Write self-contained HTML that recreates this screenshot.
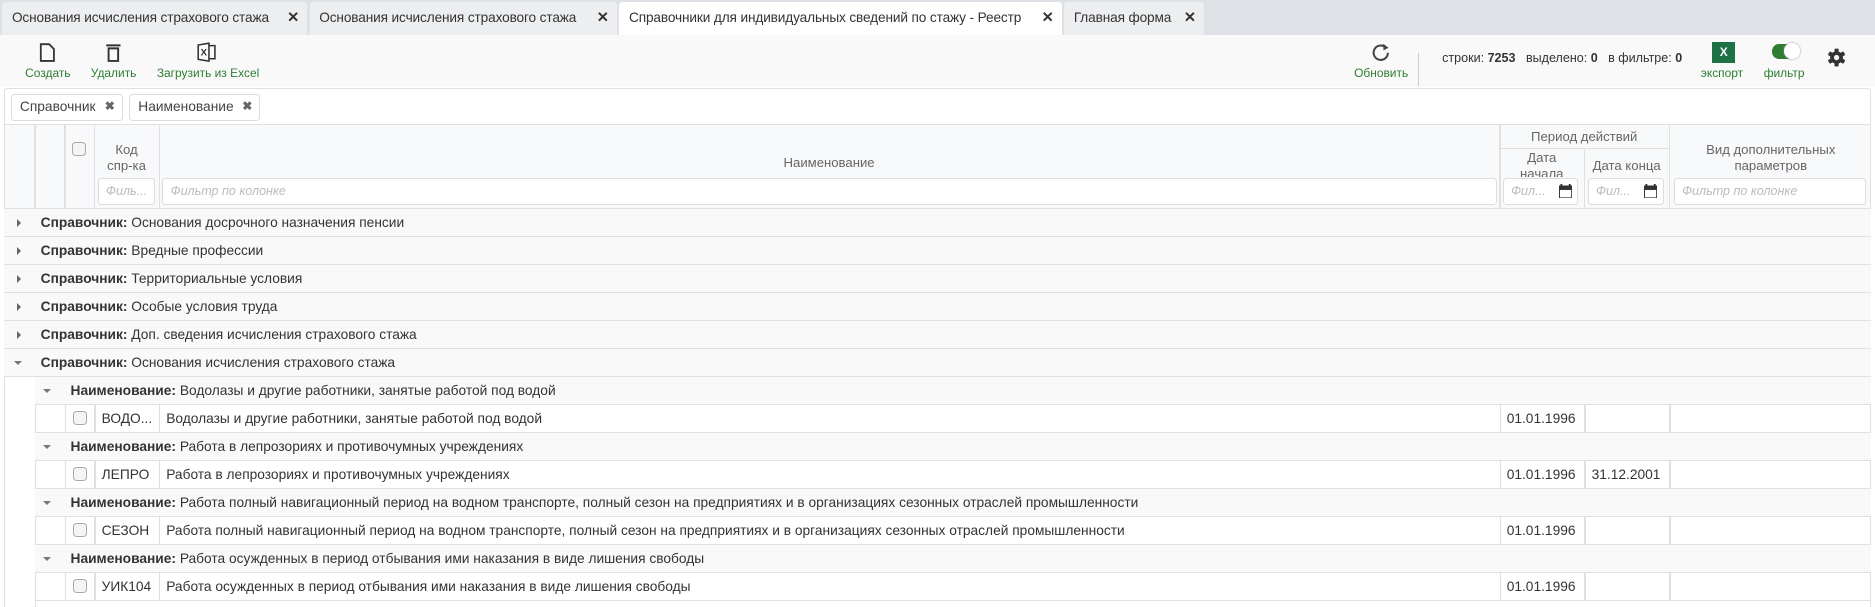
<!DOCTYPE html>
<html><head><meta charset="utf-8"><style>
*{box-sizing:border-box;margin:0;padding:0}
html,body{width:1875px;height:607px;overflow:hidden;background:#fff}
#w{zoom:1.1958;width:1568px;height:508px;position:relative;font-family:"Liberation Sans",sans-serif;font-size:11.5px;color:#333}
.a{position:absolute}
.tabs{left:0;top:0;width:1568px;height:29px;background:#dee1e5}
.tab{position:absolute;top:2px;height:27px;background:#eceef0;border-radius:3px 3px 0 0;line-height:27px;padding-left:8px;font-size:11.4px;letter-spacing:-0.1px;color:#333;white-space:nowrap}
.tab b{position:absolute;right:7px;top:0;font-size:12px;font-weight:bold}
.tb{top:29px;left:0;width:1568px;height:44px;background:#f9f9f9}
.lbl{position:absolute;top:26px;font-size:10px;color:#2e7d32;white-space:nowrap;transform:translateX(-50%)}
.grp{left:3px;top:74px;width:1562px;height:30px;border:1px solid #e0e0e0;border-bottom:none;border-radius:3px 3px 0 0;background:#fff}
.chip{position:absolute;top:4px;height:22px;border:1px solid #ddd;border-radius:3px;line-height:20px;padding-left:7px;font-size:11.5px;color:#444}
.chip b{position:absolute;right:6px;font-size:10px;color:#666}
.hdr{left:3px;top:104px;width:1562px;height:71px;background:#f8f9fa;border:1px solid #e0e0e0}
.vl{position:absolute;width:1px;background:#e0e0e0}
.hl{position:absolute;height:1px;background:#e0e0e0}
.ht{position:absolute;color:#666;font-size:11px;text-align:center;line-height:13px}
.inp{position:absolute;top:44px;height:23px;border:1px solid #ddd;border-radius:3px;background:#fff;font-style:italic;color:#bbb;font-size:10.5px;line-height:21px;padding-left:6px;white-space:nowrap;overflow:hidden}
.cb{position:absolute;width:12px;height:12px;border:1px solid #aaa;border-radius:3px;background:#f4f4f4}
.row{position:absolute;left:3px;width:1562px;height:23.4px;border-bottom:1px solid #e0e0e0;line-height:23px;white-space:nowrap}
.row.g{background:#f9f9f9}
.row span{position:absolute}
.tri{position:absolute;width:0;height:0}
.tr{border-left:4px solid #666;border-top:4px solid transparent;border-bottom:4px solid transparent;top:8px}
.td{border-top:4px solid #777;border-left:4px solid transparent;border-right:4px solid transparent;top:10px}
</style></head><body><div id="w">
<div class="a tabs">
 <div class="tab" style="left:2px;width:255px">Основания исчисления страхового стажа<b>✕</b></div>
 <div class="tab" style="left:259px;width:257px">Основания исчисления страхового стажа<b>✕</b></div>
 <div class="tab" style="left:518px;width:370px;background:#fff">Справочники для индивидуальных сведений по стажу - Реестр<b>✕</b></div>
 <div class="tab" style="left:890px;width:117px">Главная форма<b>✕</b></div>
</div>
<div class="a tb">
 <svg class="a" style="left:33px;top:7px" width="14" height="16" viewBox="0 0 14 16"><path d="M1.5 1h7l4 4v10h-11z" fill="none" stroke="#333" stroke-width="1.5"/></svg>
 <div class="lbl" style="left:40px">Создать</div>
 <svg class="a" style="left:88px;top:7px" width="14" height="16" viewBox="0 0 14 16"><path d="M1 2h12M3 4.5h8v10.5h-8z" fill="none" stroke="#333" stroke-width="1.6"/></svg>
 <div class="lbl" style="left:95px">Удалить</div>
 <svg class="a" style="left:165px;top:6px" width="16" height="17" viewBox="0 0 16 17"><path d="M1 2.5l9-1.5v15l-9-1.5zM10 3h5v11h-5" fill="none" stroke="#333" stroke-width="1.3"/><text x="3" y="11.5" font-size="8" font-weight="bold" font-family="Liberation Sans" fill="#333">X</text></svg>
 <div class="lbl" style="left:174px">Загрузить из Excel</div>
 <svg class="a" style="left:1146px;top:6px" width="18" height="18" viewBox="0 0 18 18"><path d="M15 9a6 6 0 1 1-2-4.5" fill="none" stroke="#444" stroke-width="1.7"/><path d="M11 1.5l4.5 3.3-4.2 2.2z" fill="#444"/></svg>
 <div class="lbl" style="left:1155px">Обновить</div>
 <div class="a" style="left:1186px;top:15px;width:1px;height:28px;background:#ccc"></div>
 <div class="a" style="left:1206px;top:14px;font-size:10.5px;color:#333;white-space:nowrap">строки: <b>7253</b> &nbsp; выделено: <b>0</b> &nbsp; в фильтре: <b>0</b></div>
 <div class="a" style="left:1432px;top:6px;width:19px;height:18px;background:#1e7145;color:#fff;font-size:10px;font-weight:bold;text-align:center;line-height:18px">X</div>
 <div class="lbl" style="left:1440px">экспорт</div>
 <div class="a" style="left:1482px;top:8px;width:22px;height:12px;border-radius:6px;background:#2e7d32"></div>
 <div class="a" style="left:1492px;top:7px;width:13px;height:13px;border-radius:50%;background:#fff;box-shadow:0 0 2px #999"></div>
 <div class="lbl" style="left:1492px">фильтр</div>
 <svg class="a" style="left:1528px;top:11px" width="16" height="16" viewBox="0 0 16 16"><g fill="#333"><circle cx="8" cy="8" r="5.3"/><rect x="6.3" y="0.5" width="3.4" height="15" rx="0.6"/><rect x="6.3" y="0.5" width="3.4" height="15" rx="0.6" transform="rotate(60 8 8)"/><rect x="6.3" y="0.5" width="3.4" height="15" rx="0.6" transform="rotate(120 8 8)"/></g><circle cx="8" cy="8" r="2.2" fill="#f9f9f9"/></svg>
</div>
<div class="a grp">
 <div class="chip" style="left:5px;width:94px">Справочник<b>✖</b></div>
 <div class="chip" style="left:104px;width:110px">Наименование<b>✖</b></div>
</div>
<div class="a hdr">
 <div class="vl" style="left:25px;top:0;height:70px"></div>
 <div class="vl" style="left:50px;top:0;height:70px"></div>
 <div class="vl" style="left:75px;top:0;height:70px"></div>
 <div class="vl" style="left:129px;top:0;height:70px"></div>
 <div class="vl" style="left:1250px;top:0;height:70px"></div>
 <div class="vl" style="left:1321px;top:19px;height:51px"></div>
 <div class="vl" style="left:1392px;top:0;height:70px"></div>
 <div class="hl" style="left:1250px;top:19px;width:142px"></div>
 <div class="cb" style="left:56px;top:14px"></div>
 <div class="ht" style="left:75px;top:14px;width:54px">Код<br>спр-ка</div>
 <div class="ht" style="left:129px;top:25px;width:1121px">Наименование</div>
 <div class="ht" style="left:1250px;top:3px;width:142px">Период действий</div>
 <div class="ht" style="left:1250px;top:21px;width:71px;height:22px;overflow:hidden">Дата<br>начала</div>
 <div class="ht" style="left:1321px;top:27px;width:71px">Дата конца</div>
 <div class="ht" style="left:1392px;top:14px;width:170px">Вид дополнительных<br>параметров</div>
 <div class="inp" style="left:78px;width:48px">Филь...</div>
 <div class="inp" style="left:132px;width:1116px">Фильтр по колонке</div>
 <div class="inp" style="left:1253px;width:63px">Фил...</div>
 <div class="inp" style="left:1324px;width:64px">Фил...</div>
 <div class="inp" style="left:1396px;width:161px">Фильтр по колонке</div>
 <svg class="a" style="left:1300px;top:49px" width="11" height="12" viewBox="0 0 11 12"><path d="M0 2h11v10h-11z M2 0v3M9 0v3" fill="none" stroke="#333" stroke-width="1.6"/><rect x="0" y="2" width="11" height="3" fill="#333"/></svg>
 <svg class="a" style="left:1371px;top:49px" width="11" height="12" viewBox="0 0 11 12"><path d="M0 2h11v10h-11z M2 0v3M9 0v3" fill="none" stroke="#333" stroke-width="1.6"/><rect x="0" y="2" width="11" height="3" fill="#333"/></svg>
</div>
<div class="a" style="left:3px;top:175px;width:1px;height:333px;background:#e0e0e0"></div>
<div class="a" style="left:1564px;top:175px;width:1px;height:333px;background:#e0e0e0"></div>

<div class="row g" style="top:175px"><div class="tri tr" style="left:11px"></div><span style="left:31px"><b>Справочник:</b> Основания досрочного назначения пенсии</span></div>
<div class="row g" style="top:198.4px"><div class="tri tr" style="left:11px"></div><span style="left:31px"><b>Справочник:</b> Вредные профессии</span></div>
<div class="row g" style="top:221.8px"><div class="tri tr" style="left:11px"></div><span style="left:31px"><b>Справочник:</b> Территориальные условия</span></div>
<div class="row g" style="top:245.2px"><div class="tri tr" style="left:11px"></div><span style="left:31px"><b>Справочник:</b> Особые условия труда</span></div>
<div class="row g" style="top:268.6px"><div class="tri tr" style="left:11px"></div><span style="left:31px"><b>Справочник:</b> Доп. сведения исчисления страхового стажа</span></div>
<div class="row g" style="top:292px"><div class="tri td" style="left:9px"></div><span style="left:31px"><b>Справочник:</b> Основания исчисления страхового стажа</span></div>
<div class="a" style="left:29px;top:315px;width:1px;height:193px;background:#e0e0e0"></div>

<div class="row g" style="top:315.4px;left:29px;width:1536px"><div class="tri td" style="left:7px"></div><span style="left:30px"><b>Наименование:</b> Водолазы и другие работники, занятые работой под водой</span></div>
<div class="row" style="top:338.8px;left:29px;width:1536px"><div class="vl" style="left:25px;top:0;height:23px"></div><div class="cb" style="left:32px;top:5px"></div><div class="vl" style="left:50px;top:0;height:23px"></div><span style="left:56px">ВОДО...</span><div class="vl" style="left:104px;top:0;height:23px"></div><span style="left:110px">Водолазы и другие работники, занятые работой под водой</span><div class="vl" style="left:1225px;top:0;height:23px"></div><span style="left:1231px">01.01.1996</span><div class="vl" style="left:1296px;top:0;height:23px"></div><div class="vl" style="left:1367px;top:0;height:23px"></div></div>
<div class="row g" style="top:362.2px;left:29px;width:1536px"><div class="tri td" style="left:7px"></div><span style="left:30px"><b>Наименование:</b> Работа в лепрозориях и противочумных учреждениях</span></div>
<div class="row" style="top:385.6px;left:29px;width:1536px"><div class="vl" style="left:25px;top:0;height:23px"></div><div class="cb" style="left:32px;top:5px"></div><div class="vl" style="left:50px;top:0;height:23px"></div><span style="left:56px">ЛЕПРО</span><div class="vl" style="left:104px;top:0;height:23px"></div><span style="left:110px">Работа в лепрозориях и противочумных учреждениях</span><div class="vl" style="left:1225px;top:0;height:23px"></div><span style="left:1231px">01.01.1996</span><div class="vl" style="left:1296px;top:0;height:23px"></div><span style="left:1302px">31.12.2001</span><div class="vl" style="left:1367px;top:0;height:23px"></div></div>
<div class="row g" style="top:409px;left:29px;width:1536px"><div class="tri td" style="left:7px"></div><span style="left:30px"><b>Наименование:</b> Работа полный навигационный период на водном транспорте, полный сезон на предприятиях и в организациях сезонных отраслей промышленности</span></div>
<div class="row" style="top:432.4px;left:29px;width:1536px"><div class="vl" style="left:25px;top:0;height:23px"></div><div class="cb" style="left:32px;top:5px"></div><div class="vl" style="left:50px;top:0;height:23px"></div><span style="left:56px">СЕЗОН</span><div class="vl" style="left:104px;top:0;height:23px"></div><span style="left:110px">Работа полный навигационный период на водном транспорте, полный сезон на предприятиях и в организациях сезонных отраслей промышленности</span><div class="vl" style="left:1225px;top:0;height:23px"></div><span style="left:1231px">01.01.1996</span><div class="vl" style="left:1296px;top:0;height:23px"></div><div class="vl" style="left:1367px;top:0;height:23px"></div></div>
<div class="row g" style="top:455.8px;left:29px;width:1536px"><div class="tri td" style="left:7px"></div><span style="left:30px"><b>Наименование:</b> Работа осужденных в период отбывания ими наказания в виде лишения свободы</span></div>
<div class="row" style="top:479.2px;left:29px;width:1536px"><div class="vl" style="left:25px;top:0;height:23px"></div><div class="cb" style="left:32px;top:5px"></div><div class="vl" style="left:50px;top:0;height:23px"></div><span style="left:56px">УИК104</span><div class="vl" style="left:104px;top:0;height:23px"></div><span style="left:110px">Работа осужденных в период отбывания ими наказания в виде лишения свободы</span><div class="vl" style="left:1225px;top:0;height:23px"></div><span style="left:1231px">01.01.1996</span><div class="vl" style="left:1296px;top:0;height:23px"></div><div class="vl" style="left:1367px;top:0;height:23px"></div></div>
</div></body></html>
